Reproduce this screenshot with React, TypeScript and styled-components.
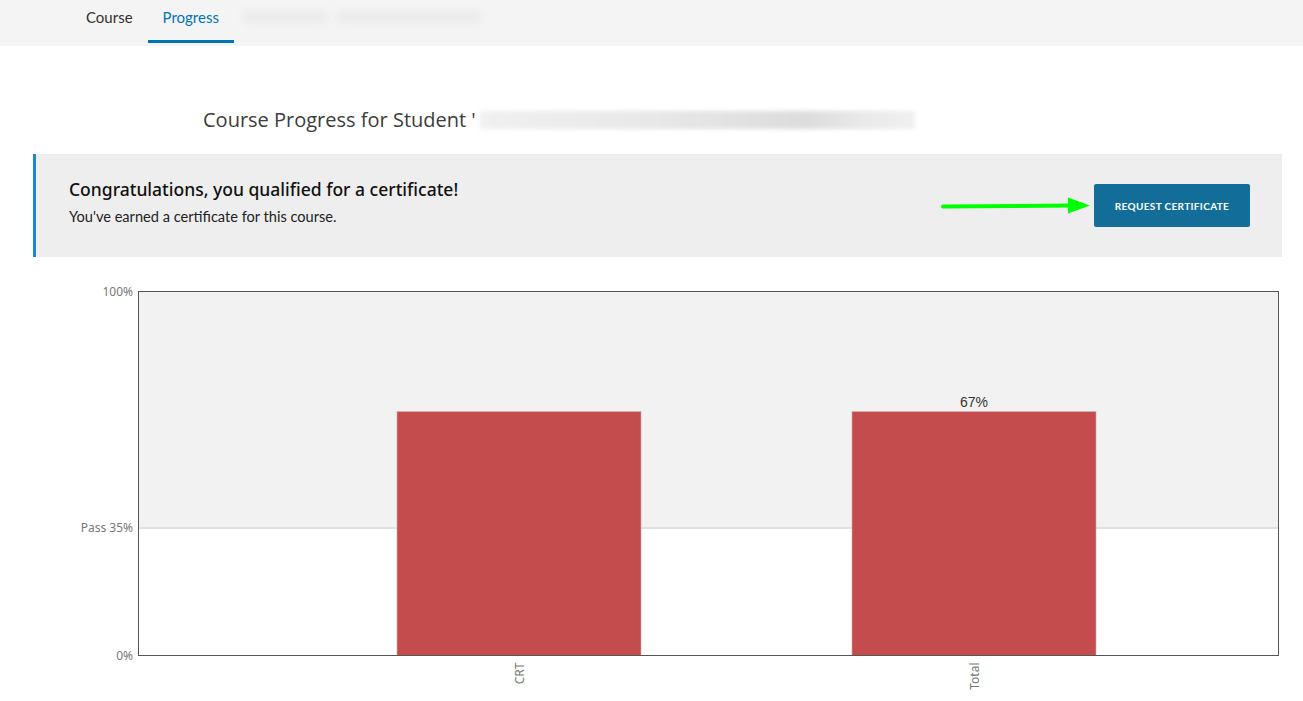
import React from "react"
import styled, { createGlobalStyle } from "styled-components"

// Data
const tabs = [
  { label: "Course", active: false },
  { label: "Progress", active: true },
]

const bars = [
  { label: "CRT", value: 67, x: 397, showValue: false },
  { label: "Total", value: 67, x: 852, showValue: true },
]

// Chart geometry (svg coords)
const plot = { left: 138.5, right: 1278.5, top: 12.5, bottom: 376.5 }
const barWidth = 244
const pass = 35
const yFor = (v: number) => plot.bottom - ((plot.bottom - plot.top) * v) / 100

const GlobalStyle = createGlobalStyle`
  body {
    margin: 0;
    background: #fff;
    font-family: "Lato", "Noto Sans", sans-serif;
    color: #313131;
  }
`

const App: React.FC = () => {
  return (
    <>
      <GlobalStyle />
      <NavBar>
        {tabs.map(({ label, active }) => (
          <Tab key={label} $active={active}>
            {label}
          </Tab>
        ))}
        <Redacted $width={86} />
        <Redacted $width={146} />
      </NavBar>

      <Heading>
        Course Progress for Student '
        <HeadingBlur />
      </Heading>

      <Banner>
        <BannerText>
          <BannerTitle>Congratulations, you qualified for a certificate!</BannerTitle>
          <BannerBody>You've earned a certificate for this course.</BannerBody>
        </BannerText>
        <Arrow width="152" height="20" viewBox="0 0 152 20">
          <line x1="3" y1="10.5" x2="132" y2="9.5" stroke="#00ff00" strokeWidth="4" strokeLinecap="round" />
          <polygon points="128,1.5 150,9.5 128,17.5" fill="#00ff00" />
        </Arrow>
        <RequestButton>REQUEST CERTIFICATE</RequestButton>
      </Banner>

      <ChartWrap>
        <svg width="1303" height="422" viewBox="0 0 1303 422">
          <rect x={plot.left} y={plot.top} width={plot.right - plot.left} height={yFor(pass) - plot.top} fill="#f2f2f2" />
          <line x1={plot.left} x2={plot.right} y1={yFor(pass)} y2={yFor(pass)} stroke="#cccccc" strokeWidth="1" />

          {bars.map(({ label, value, x, showValue }) => {
            const top = yFor(value)
            const cx = x + barWidth / 2
            return (
              <g key={label}>
                <rect x={x} y={top} width={barWidth} height={plot.bottom - top} fill="#c44c4c" stroke="#d9a6a6" strokeWidth="0.6" />
                {showValue && (
                  <text x={cx} y={top - 5} textAnchor="middle" fontSize="14" fill="#333" fontFamily="Liberation Sans, Arial, sans-serif">
                    {value}%
                  </text>
                )}
                <text
                  transform={`translate(${cx + 5}, ${plot.bottom + 7}) rotate(-90)`}
                  textAnchor="end"
                  fontSize="12"
                  fill="#777"
                  fontFamily="Noto Sans, sans-serif"
                >
                  {label}
                </text>
              </g>
            )
          })}

          <rect x={plot.left} y={plot.top} width={plot.right - plot.left} height={plot.bottom - plot.top} fill="none" stroke="#555" strokeWidth="1" />

          <g fontSize="12" fill="#777" textAnchor="end" fontFamily="Noto Sans, sans-serif">
            <text x="133" y={plot.top + 4}>100%</text>
            <text x="133" y={yFor(pass) + 4}>Pass 35%</text>
            <text x="133" y={plot.bottom + 4}>0%</text>
          </g>
        </svg>
      </ChartWrap>
    </>
  )
}

const NavBar = styled.nav`
  display: flex;
  align-items: flex-start;
  height: 46px;
  padding-left: 71px;
  background: #f4f4f4;
`

const Tab = styled.a<{ $active: boolean }>`
  box-sizing: border-box;
  height: 43px;
  padding: 7px 15px 0;
  font-size: 15px;
  line-height: 20px;
  color: ${({ $active }) => ($active ? "#0075b4" : "#313131")};
  border-bottom: 3px solid ${({ $active }) => ($active ? "#0075b4" : "transparent")};
  cursor: pointer;
`

const Redacted = styled.span<{ $width: number }>`
  width: ${({ $width }) => $width}px;
  height: 14px;
  margin: 10px 0 0 8px;
  border-radius: 8px;
  background: #ececec;
  filter: blur(3px);
`

const Heading = styled.h1`
  display: flex;
  align-items: center;
  margin: 61px 0 0 203px;
  font-family: "Open Sans", sans-serif;
  font-size: 20px;
  font-weight: 400;
  line-height: 26px;
  color: #3c3c3c;
`

const HeadingBlur = styled.span`
  width: 435px;
  height: 18px;
  margin-left: 4px;
  background: linear-gradient(90deg, #f0f0f0, #e8e8e8 40%, #dcdcdc 75%, #e9e9e9 88%, #f0f0f0);
  filter: blur(2px);
`

const Banner = styled.section`
  display: flex;
  align-items: center;
  height: 103px;
  margin: 21px 21px 0 33px;
  padding: 0 32px 0 33px;
  border-left: 3px solid #1d8acd;
  background: #eeeeee;
`

const BannerText = styled.div`
  flex: 1;
  margin-top: -8px;
`

const BannerTitle = styled.h2`
  margin: 0 0 7px;
  font-family: "Noto Sans", sans-serif;
  font-size: 17.5px;
  font-weight: 500;
  line-height: 23px;
  color: #111;
`

const BannerBody = styled.p`
  margin: 0;
  font-size: 14.6px;
  line-height: 18px;
  color: #222;
`

const Arrow = styled.svg`
  margin-right: 2px;
`

const RequestButton = styled.button`
  width: 156px;
  height: 43px;
  padding: 0;
  border: none;
  border-radius: 2px;
  background: #126e99;
  color: #fff;
  font-family: "Lato", sans-serif;
  font-size: 10px;
  font-weight: 700;
  letter-spacing: 0.35px;
  cursor: pointer;
`

const ChartWrap = styled.div`
  margin-top: 22px;
  line-height: 0;
`

export default App
